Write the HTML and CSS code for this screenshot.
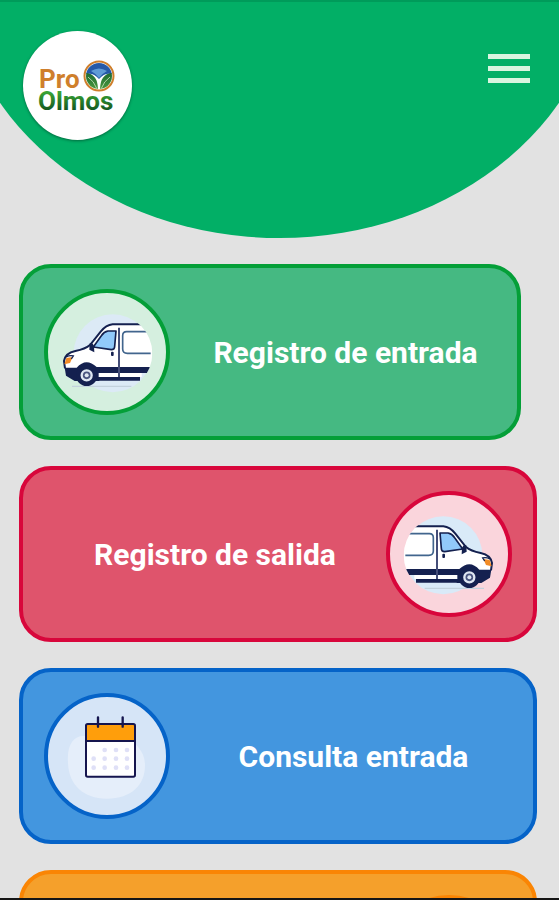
FILE: index.html
```html
<!DOCTYPE html>
<html lang="es">
<head>
    <meta charset="UTF-8">
    <meta name="viewport" content="width=device-width, initial-scale=1.0">
    <title>Pro Olmos</title>
    <link rel="stylesheet" href="styles.css">
</head>
<body>

    <div class="app">
        <header class="header">
            <a class="logo" href="#" aria-label="Pro Olmos">
                <svg viewBox="0 0 109 109">
                    <defs>
                        <linearGradient id="verde" x1="0" y1="0" x2="0" y2="1">
                            <stop offset="0.2" stop-color="#3aa535"/>
                            <stop offset="0.85" stop-color="#12511f"/>
                        </linearGradient>
                        <linearGradient id="hoja" x1="0" y1="0" x2="0" y2="1">
                            <stop offset="0" stop-color="#1f6b33"/>
                            <stop offset="1" stop-color="#4a9a3c"/>
                        </linearGradient>
                        <clipPath id="esfera"><circle cx="76" cy="45" r="13"/></clipPath>
                    </defs>
                    <text class="logo-pro" x="16" y="57">Pro</text>
                    <text class="logo-olmos" x="15" y="79" fill="url(#verde)">Olmos</text>
                    <circle cx="76" cy="45" r="14.5" fill="#fff" stroke="#cf7f2c" stroke-width="2"/>
                    <g clip-path="url(#esfera)">
                        <rect x="61" y="30" width="30" height="30" fill="#fff"/>
                        <path d="M61 30h30v14q-8-4-15 4q-7-8-15-4z" fill="#2559a8"/>
                        <path d="M68 40q8-5 16 0q-4 2-8 7q-4-5-8-7z" fill="#5f9bd6"/>
                        <path d="M60 42q15-1 15 17q-15 0-15-17z" fill="url(#hoja)"/>
                        <path d="M92 42q-15-1-15 17q15 0 15-17z" fill="url(#hoja)"/>
                        <path d="M65 46q6 4 9 12M87 46q-6 4-9 12" fill="none" stroke="#cfe5c4" stroke-width="0.8"/>
                    </g>
                </svg>
            </a>
            <button class="menu-button" type="button" aria-label="Menú">
                <span></span>
                <span></span>
                <span></span>
            </button>
        </header>

        <main class="opciones">
            <button class="opcion entrada" type="button">
                <span class="icono">
                    <svg viewBox="114 114 354 354">
                        <defs>
                            <clipPath id="fondo">
                                <path d="M150 170H310V178A117 117 0 0 1 310 412H150z"/>
                            </clipPath>
                        </defs>
                        <circle cx="308" cy="295" r="117" fill="#dceaf6"/>
                        <g id="furgoneta">
                            <path d="M186 394H364" stroke="#c3d2dd" stroke-width="4"/>
                            <g clip-path="url(#fondo)">
                                <path d="M430 208H308Q288 210 272 230L240 270Q226 282 196 288Q166 294 162 318L166 350H430z" fill="#fff"/>
                                <path d="M164 338H200Q228 306 260 336H430V354H268V378H194L168 362z" fill="#14204f"/>
                                <path d="M266 354H395V366H266z" fill="#fff"/>
                                <path d="M262 366H390V377H258z" fill="#14204f"/>
                                <path d="M400 208H308Q288 210 272 230L240 270Q226 282 196 288Q166 294 162 318L165 340" fill="none" stroke="#14204f" stroke-width="6"/>
                                <path d="M318 228H294Q282 230 274 242L250 276L304 284Q314 284 314 274z" fill="#91c9fa" stroke="#14204f" stroke-width="5" stroke-linejoin="round"/>
                                <path d="M239 265Q248 262 252 272L253 292L238 284z" fill="#14204f"/>
                                <path d="M327 218V366" stroke="#444d78" stroke-width="6"/>
                                <path d="M412 230H350Q338 230 338 242V282Q338 295 352 295H422" fill="none" stroke="#41658d" stroke-width="5"/>
                                <rect x="303" y="290" width="8" height="13" rx="3" fill="#14204f"/>
                                <path d="M163 328L169 309L188 306L180 324z" fill="#f28b25"/>
                                <path d="M168 306Q180 300 190 303L184 312" fill="none" stroke="#14204f" stroke-width="4"/>
                            </g>
                            <circle cx="230" cy="361" r="32" fill="#14204f"/>
                            <circle cx="230" cy="361" r="15" fill="#4a5580" stroke="#dfe7f2" stroke-width="7"/>
                            <circle cx="230" cy="361" r="6" fill="#dfe7f2"/>
                        </g>
                    </svg>
                </span>
                <span class="texto">Registro de entrada</span>
            </button>

            <button class="opcion salida invertida" type="button">
                <span class="icono">
                    <svg class="espejo" viewBox="114 114 354 354">
                        <circle cx="308" cy="295" r="117" fill="#d9eaf8"/>
                        <use href="#furgoneta"/>
                    </svg>
                </span>
                <span class="texto">Registro de salida</span>
            </button>

            <button class="opcion consulta" type="button">
                <span class="icono">
                    <svg viewBox="114 111 354 354">
                        <path d="M174 310C170 255 190 228 220 228H360C374 255 405 270 405 316C405 375 365 416 290 416C220 416 177 375 174 310z" fill="#e5eefa"/>
                        <rect x="228" y="192" width="147" height="158" rx="5" fill="#fff"/>
                        <path d="M228 192H375V243H228z" fill="#ff9e0b"/>
                        <path d="M228 243H375" stroke="#15154e" stroke-width="6"/>
                        <rect x="228" y="192" width="147" height="158" rx="5" fill="none" stroke="#15154e" stroke-width="6"/>
                        <path d="M264 172V200M338 172V200" stroke="#15154e" stroke-width="7" stroke-linecap="round"/>
                        <g fill="#dfe0f7">
                            <circle cx="284" cy="270" r="7"/>
                            <circle cx="318" cy="270" r="7"/>
                            <circle cx="351" cy="270" r="7"/>
                            <circle cx="251" cy="296" r="7"/>
                            <circle cx="284" cy="296" r="7"/>
                            <circle cx="318" cy="296" r="7"/>
                            <circle cx="351" cy="296" r="7"/>
                            <circle cx="251" cy="323" r="7"/>
                            <circle cx="284" cy="323" r="7"/>
                            <circle cx="318" cy="323" r="7"/>
                            <circle cx="351" cy="323" r="7"/>
                        </g>
                    </svg>
                </span>
                <span class="texto">Consulta entrada</span>
            </button>

            <button class="opcion consulta-salida invertida" type="button" aria-label="Consulta salida">
                <span class="icono"></span>
                <span class="texto"></span>
            </button>
        </main>
    </div>

</body>
</html>
```
FILE: styles.css
```css
/* General */
* {
    box-sizing: border-box;
}

body {
    margin: 0;
    font-family: Roboto, Arial, sans-serif;
    background-color: #e2e2e2;
}

.app {
    height: 100vh;
    overflow: hidden;
    border-bottom: 2px solid #151515;
}

/* Cabecera curva */
.header {
    display: flex;
    justify-content: space-between;
    align-items: flex-start;
    height: 238px;
    padding: 29px 29px 0 23px;
    border-top: 2px solid #009b5a;
    background-color: #02af66;
    clip-path: ellipse(58% 274px at 50% -36px);
}

.logo {
    width: 109px;
    height: 109px;
    border-radius: 50%;
    background-color: #fff;
    box-shadow: 0 1px 3px rgba(0, 0, 0, 0.4);
}

.logo svg {
    display: block;
}

.logo-pro,
.logo-olmos {
    font-size: 26px;
    font-weight: 700;
}

.logo-pro {
    fill: #cf7f2c;
}

.menu-button {
    display: flex;
    flex-direction: column;
    gap: 7px;
    width: 42px;
    margin-top: 23px;
    padding: 0;
    border: none;
    background: none;
    cursor: pointer;
}

.menu-button span {
    width: 100%;
    height: 5px;
    background-color: #d9f5e0;
}

/* Opciones */
.opciones {
    display: flex;
    flex-direction: column;
    gap: 26px;
    padding: 26px 22px 26px 19px;
}

.opcion {
    display: flex;
    align-items: center;
    padding: 21px 0 21px 21px;
    border: 4px solid;
    border-radius: 32px;
    color: #fff;
    font-family: inherit;
    font-size: 30px;
    font-weight: 700;
    cursor: pointer;
}

.icono {
    flex: none;
    width: 126px;
    height: 126px;
    border: 4px solid;
    border-radius: 50%;
}

.icono svg {
    display: block;
}

.espejo {
    transform: scaleX(-1);
}

.texto {
    flex: 1;
    padding-left: 4px;
    text-align: center;
}

.invertida {
    flex-direction: row-reverse;
    padding-right: 21px;
}

.invertida .texto {
    padding-left: 0;
}

/* Colores de cada opción */
.entrada {
    margin-right: 16px;
    background-color: #45b982;
}

.entrada,
.entrada .icono {
    border-color: #049f38;
}

.entrada .icono {
    background-color: #d5efdf;
}

.salida {
    background-color: #df546c;
}

.salida,
.salida .icono {
    border-color: #d8063b;
}

.salida .icono {
    background-color: #fad5dc;
}

.consulta {
    background-color: #4396df;
}

.consulta,
.consulta .icono {
    border-color: #0563c8;
}

.consulta .icono {
    background-color: #d6e5f7;
}

.consulta-salida {
    background-color: #f5a02b;
}

.consulta-salida,
.consulta-salida .icono {
    border-color: #fa8504;
}

.consulta-salida .icono {
    background-color: #fdebd2;
}
```
